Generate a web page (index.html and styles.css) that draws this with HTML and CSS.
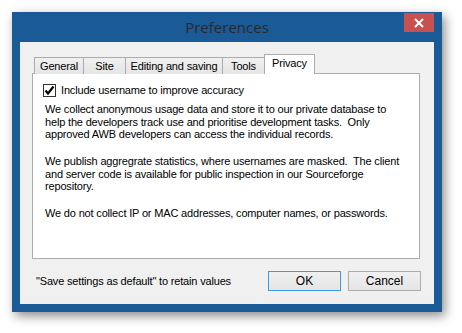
FILE: index.html
```html
<!DOCTYPE html>
<html>
<head>
<meta charset="utf-8">
<link rel="stylesheet" href="styles.css">
</head>
<body>
<div class="window">
  <div class="titlebar">
    <span class="spacer"></span>
    <span class="title">Preferences</span>
    <span class="close"><svg width="10" height="10" viewBox="0 0 10 10"><path d="M1 1L9 9M9 1L1 9" stroke="#fff" stroke-width="2"/></svg></span>
  </div>
  <div class="client">
    <div class="tabs">
      <div class="tab t-general">General</div>
      <div class="tab t-site">Site</div>
      <div class="tab t-edit">Editing and saving</div>
      <div class="tab t-tools">Tools</div>
      <div class="tab active t-privacy">Privacy</div>
    </div>
    <div class="panel">
      <div class="check-row">
        <span class="checkbox"><svg width="11" height="11" viewBox="0 0 11 11"><path d="M1.5 5.5L4 8.5L9.5 1.5" fill="none" stroke="#000" stroke-width="2.2"/></svg></span>
        <span class="check-label">Include username to improve accuracy</span>
      </div>
      <p class="para">We collect anonymous usage data and store it to our private database to<br>help the developers track use and prioritise development tasks.&nbsp; Only<br>approved AWB developers can access the individual records.</p>
      <p class="para">We publish aggregrate statistics, where usernames are masked.&nbsp; The client<br>and server code is available for public inspection in our Sourceforge<br>repository.</p>
      <p class="para">We do not collect IP or MAC addresses, computer names, or passwords.</p>
    </div>
    <div class="footer">
      <span class="hint">"Save settings as default" to retain values</span>
      <span class="btn default">OK</span>
      <span class="btn">Cancel</span>
    </div>
  </div>
</div>
</body>
</html>
```

FILE: styles.css
```css
html, body {
  margin: 0;
  padding: 0;
  background: #ffffff;
}
body {
  width: 462px;
  height: 333px;
  overflow: hidden;
  font-family: "Liberation Sans", Arial, sans-serif;
  font-size: 11px;
  letter-spacing: -0.17px;
  color: #000;
}
.window {
  margin: 12px 0 0 12px;
  width: 430px;
  height: 300px;
  box-sizing: border-box;
  background: #1a5a96;
  padding: 0 8px 8px 8px;
  display: flex;
  flex-direction: column;
  box-shadow: 3px 4px 10px rgba(0,0,0,0.45);
}
.titlebar {
  height: 30px;
  display: grid;
  grid-template-columns: 1fr auto 1fr;
  align-items: start;
}
.title {
  font-family: "Open Sans", "Noto Sans", sans-serif;
  font-size: 15px;
  letter-spacing: 0;
  color: #2a2a2a;
  line-height: 30px;
}
.close {
  justify-self: end;
  margin-top: 1px;
  width: 30px;
  height: 19px;
  background: #c75050;
  display: flex;
  align-items: center;
  justify-content: center;
}
.client {
  flex: 1;
  background: #f0f0f0;
  padding: 12px 14px 0 12px;
  display: flex;
  flex-direction: column;
}
.tabs {
  display: flex;
  align-items: flex-end;
  height: 20px;
  padding-left: 2px;
  position: relative;
  z-index: 1;
  margin-bottom: -1px;
}
.tab {
  height: 17px;
  box-sizing: border-box;
  border: 1px solid #acacac;
  border-bottom: none;
  background: linear-gradient(#f0f0f0, #e5e5e5);
  line-height: 16px;
  margin-right: -1px;
  white-space: nowrap;
  text-align: center;
  color: #000;
}
.tab.active {
  height: 20px;
  background: #ffffff;
  line-height: 17px;
}
.t-general { width: 50px; }
.t-site { width: 43px; }
.t-edit { width: 98px; }
.t-tools { width: 43px; }
.t-privacy { width: 51px; }
.panel {
  height: 186px;
  box-sizing: border-box;
  background: #ffffff;
  border: 1px solid #adadad;
  padding: 10px 0 0 12px;
}
.check-row {
  display: flex;
  align-items: center;
  margin-left: -2px;
  height: 13px;
}
.checkbox {
  width: 13px;
  height: 13px;
  box-sizing: border-box;
  border: 1px solid #333;
  background: #fff;
  display: flex;
  align-items: center;
  justify-content: center;
  margin-right: 5px;
}
.check-label {
  line-height: 13px;
}
.para {
  margin: 6px 0 0 0;
  line-height: 12.7px;
}
.para + .para {
  margin-top: 13.7px;
}
.footer {
  display: flex;
  align-items: center;
  padding: 12px 0 0 4px;
}
.hint {
  flex: 1;
}
.btn {
  width: 73px;
  height: 20px;
  box-sizing: border-box;
  border: 1px solid #acacac;
  background: linear-gradient(#f0f0f0, #e5e5e5);
  display: flex;
  align-items: center;
  justify-content: center;
  font-size: 12px;
  letter-spacing: 0;
  margin-left: 8px;
  margin-right: -1px;
}
.btn.default {
  border-color: #3c9ae8;
}
```
